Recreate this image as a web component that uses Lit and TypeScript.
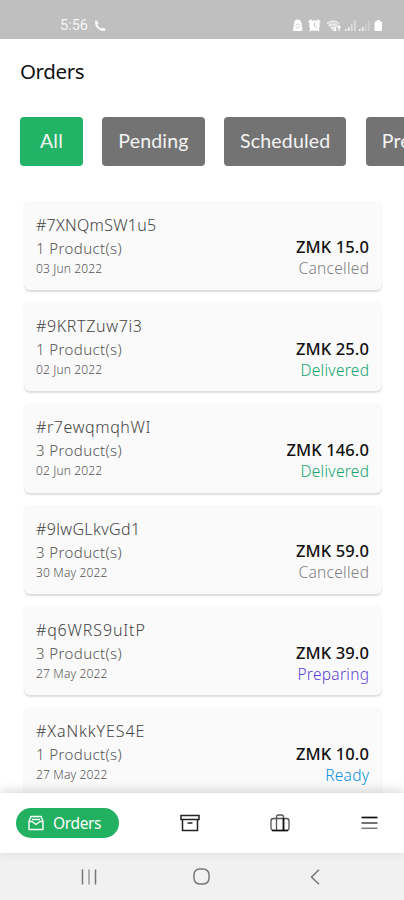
import { LitElement, html, css, svg } from "lit";
import { customElement, property } from "lit/decorators.js";
import { classMap } from "lit/directives/class-map.js";

interface Order {
  id: string;
  count: number;
  date: string;
  price: string;
  status: string;
  tracking: number;
}

const ORDERS: Order[] = [
  { id: "#7XNQmSW1u5", count: 1, date: "03 Jun 2022", price: "15.0", status: "Cancelled", tracking: 0.28 },
  { id: "#9KRTZuw7i3", count: 1, date: "02 Jun 2022", price: "25.0", status: "Delivered", tracking: 0.65 },
  { id: "#r7ewqmqhWI", count: 3, date: "02 Jun 2022", price: "146.0", status: "Delivered", tracking: 0.6 },
  { id: "#9lwGLkvGd1", count: 3, date: "30 May 2022", price: "59.0", status: "Cancelled", tracking: 0.35 },
  { id: "#q6WRS9uItP", count: 3, date: "27 May 2022", price: "39.0", status: "Preparing", tracking: 0.85 },
  { id: "#XaNkkYES4E", count: 1, date: "27 May 2022", price: "10.0", status: "Ready", tracking: 0.9 },
];

@customElement("order-card")
export class OrderCard extends LitElement {
  @property({ attribute: false }) order!: Order;

  static styles = css`
    :host {
      display: flex;
      justify-content: space-between;
      flex: none;
      box-sizing: border-box;
      height: 89.4px;
      padding: 13px 13px 0 12px;
      border-radius: 6px;
      background: #fafafa;
      box-shadow: 0 1.5px 1.5px rgba(0, 0, 0, 0.13);
      white-space: nowrap;
    }
    .right {
      padding-top: 22.8px;
      text-align: right;
    }
    .id {
      font-size: 16px;
      font-weight: 300;
      line-height: 23px;
      color: #444;
    }
    .count {
      font-size: 15px;
      font-weight: 300;
      line-height: 22px;
      color: #555;
      letter-spacing: 0.4px;
    }
    .date {
      font-size: 12px;
      font-weight: 300;
      line-height: 20px;
      color: #555;
      letter-spacing: 0.15px;
    }
    .price {
      font-size: 16.5px;
      font-weight: 500;
      line-height: 22px;
      color: #111;
      letter-spacing: 0.1px;
    }
    .status {
      font-size: 15.5px;
      font-weight: 300;
      line-height: 21px;
      letter-spacing: 0.28px;
      margin-right: -0.25px;
    }
    .cancelled { color: #808080; }
    .delivered { color: #12a56c; }
    .preparing { color: #5b3fd6; }
    .ready { color: #0a8fdc; }
  `;

  render() {
    const o = this.order;
    return html`
      <div>
        <div class="id" style="letter-spacing:${o.tracking}px">${o.id}</div>
        <div class="count">${o.count} Product(s)</div>
        <div class="date">${o.date}</div>
      </div>
      <div class="right">
        <div class="price">ZMK ${o.price}</div>
        <div class="status ${o.status.toLowerCase()}">${o.status}</div>
      </div>
    `;
  }
}

const bars = (x: number, faint: number) => svg`
  <g fill="#fff" opacity=".8">
    <rect x=${x} y="10" width="1.6" height="2" />
    <rect x=${x + 3} y="8" width="1.6" height="4" />
    <rect x=${x + 6} y="5" width="1.6" height="7" opacity=${faint} />
    <rect x=${x + 9} y="1.5" width="1.6" height="10.5" opacity=${faint} />
  </g>`;

@customElement("app-root")
export class AppRoot extends LitElement {
  static styles = css`
    :host {
      display: flex;
      flex-direction: column;
      width: 404px;
      height: 900px;
      overflow: hidden;
      background: #fff;
      font-family: "Noto Sans", "Open Sans", sans-serif;
    }
    svg { display: block; flex: none; }
    .statusbar {
      flex: none;
      display: flex;
      align-items: center;
      justify-content: space-between;
      box-sizing: border-box;
      height: 39px;
      padding: 12px 20px 0 60px;
      background: #bfbfbf;
      color: #f5f5f5;
      font: 14.5px/18px Roboto, sans-serif;
    }
    .clock { display: flex; align-items: center; gap: 6px; }
    h1 {
      flex: none;
      box-sizing: border-box;
      margin: 0;
      padding: 16px 20px 0;
      height: 77.5px;
      font-size: 20.5px;
      font-weight: 400;
      line-height: 32px;
      letter-spacing: -0.4px;
      color: #111;
    }
    .chips {
      flex: none;
      display: flex;
      gap: 19.3px;
      height: 49.5px;
      padding-left: 20px;
    }
    .chip {
      flex: none;
      display: flex;
      align-items: center;
      justify-content: center;
      box-sizing: border-box;
      padding: 0 16px 2px;
      border-radius: 4px;
      background: #737373;
      color: #f4f4f4;
      font-family: Lato, "Noto Sans", sans-serif;
      font-size: 19.5px;
      letter-spacing: 0.2px;
    }
    .active { background: #22b367; padding: 0 20px 2px; }
    .list {
      flex: 1;
      min-height: 0;
      display: flex;
      flex-direction: column;
      gap: 12px;
      overflow: hidden;
      padding: 34.5px 22px 0 24px;
    }
    .nav {
      position: relative;
      flex: none;
      display: flex;
      align-items: center;
      box-sizing: border-box;
      height: 60px;
      padding-left: 16px;
      background: #fff;
      box-shadow: 0 -2px 10px rgba(0, 0, 0, 0.16);
    }
    .pill {
      display: flex;
      align-items: center;
      gap: 9px;
      box-sizing: border-box;
      width: 103px;
      height: 30px;
      padding-left: 12px;
      margin-right: 60.5px;
      border-radius: 15px;
      background: #22b061;
      color: #fff;
      font-size: 15.5px;
      letter-spacing: -0.35px;
    }
    .archive { margin-right: 70px; }
    .case { margin-right: 71.5px; }
    .system {
      flex: none;
      display: flex;
      align-items: center;
      box-sizing: border-box;
      height: 47px;
      padding-left: 80.5px;
      background: #f1f1f1;
    }
    .recents { margin-right: 96.5px; }
    .home { margin-right: 99.5px; }
  `;

  render() {
    return html`
      <div class="statusbar">
        <div class="clock">
          <span>5:56</span>
          <svg width="12" height="12" viewBox="0 0 12 12"><path fill="#f5f5f5" d="M1 .8 3.200.5 4.600 3.600 3.400 4.800Q4.800 7.400 7.200 8.600L8.400 7.400 11.500 8.800 11.200 11Q4.600 11.400 1.800 6.200.5 3.200 1 .8Z" /></svg>
        </div>
        <svg width="92" height="13" viewBox="0 0 92 13">
          <path fill="#fff" d="M2 5Q2 .5 5.500.5 9.500.5 9.500 5L10.500 11Q10.500 12 9 12H2Q.5 12 1 10Z" />
          <path fill="none" stroke="#bfbfbf" stroke-width=".8" d="M3.500 6.500Q5.500 3.500 7.500 6M7.500 7.500Q5.500 10.500 3.500 8" />
          <circle cx="22.500" cy="6.500" r="5.300" fill="#fff" />
          <path stroke="#fff" stroke-width="2" d="M17 3.500 19.500 1M25.500 1 28 3.500M18 12l1.500-2M27 12l-1.500-2" />
          <path fill="none" stroke="#bfbfbf" d="M22.500 3.500V7l2.500 1.500" />
          <path fill="#fff" opacity=".65" d="M34.500 4Q41 -1.500 47.500 4L41 12Z" />
          <path fill="none" stroke="#bfbfbf" stroke-width=".8" d="M36 5.500Q41 1.800 46 5.500M38 8Q41 5.500 44 8" />
          <path fill="none" stroke="#fff" stroke-width="1.400" d="M43.500 8v4M42 10.500l1.500 1.500M47 11.500v-4.500M45.500 8.500 47 7l1.500 1.500" />
          ${bars(53, 0.65)} ${bars(67, 0.35)}
          <path fill="#fff" d="M82.500 3.500q0-1 1-1h1.300V1h3v1.500h1.200q1 0 1 1V11q0 1-1 1H83.500q-1 0-1-1Z" />
        </svg>
      </div>
      <h1>Orders</h1>
      <div class="chips">
        ${["All", "Pending", "Scheduled", "Preparing"].map(
          (t, i) => html`<div class=${classMap({ chip: true, active: i === 0 })}>${t}</div>`,
        )}
      </div>
      <div class="list">${ORDERS.map((o) => html`<order-card .order=${o}></order-card>`)}</div>
      <div class="nav">
        <div class="pill">
          <svg width="16" height="16" viewBox="0 0 16 16" fill="none" stroke="#fff" stroke-width="1.400" stroke-linejoin="round"><path d="M1 6 3 1.500h10L15 6v8.500H1ZM1 6.500h3L8 9.500l4-3h3M4 4.500h8" /></svg>
          <span>Orders</span>
        </div>
        <svg class="archive" width="20" height="18" viewBox="0 0 20 18" fill="none" stroke="#222" stroke-width="1.500"><path d="M1 1.500h18v4H1ZM2.500 5.500v11h15v-11M7.500 9h5" /></svg>
        <svg class="case" width="20" height="18" viewBox="0 0 20 18" fill="none" stroke="#555" stroke-width="1.300"><rect x="1" y="4.500" width="18" height="12" rx="2.500" /><path d="M6.500 16.500V3q0-2 2-2h3q2 0 2 2v13.500" /><path stroke="#111" stroke-width="1.700" d="M2 16.500h16M13.500 4v12.500" /></svg>
        <svg width="17" height="14" viewBox="0 0 17 14"><path stroke="#111" stroke-width="1.700" d="M.5 1.500h16" /><path stroke="#444" stroke-width="1.500" d="M.5 7h16" /><path stroke="#777" stroke-width="1.500" d="M.5 12.300h16" /></svg>
      </div>
      <div class="system">
        <svg class="recents" width="16" height="16" viewBox="0 0 16 16" stroke="#777" stroke-width="1.500"><path d="M1.500.5v15M14.500.5v15" /><path stroke="#999" d="M8 .5v15" /></svg>
        <svg class="home" width="17" height="17" viewBox="0 0 17 17" fill="none" stroke="#777" stroke-width="1.500"><rect x="1" y="1" width="15" height="15" rx="5.500" /></svg>
        <svg width="10" height="16" viewBox="0 0 10 16" fill="none" stroke="#777" stroke-width="1.500"><path d="M9 .8 1.500 8 9 15.200" /></svg>
      </div>
    `;
  }
}
